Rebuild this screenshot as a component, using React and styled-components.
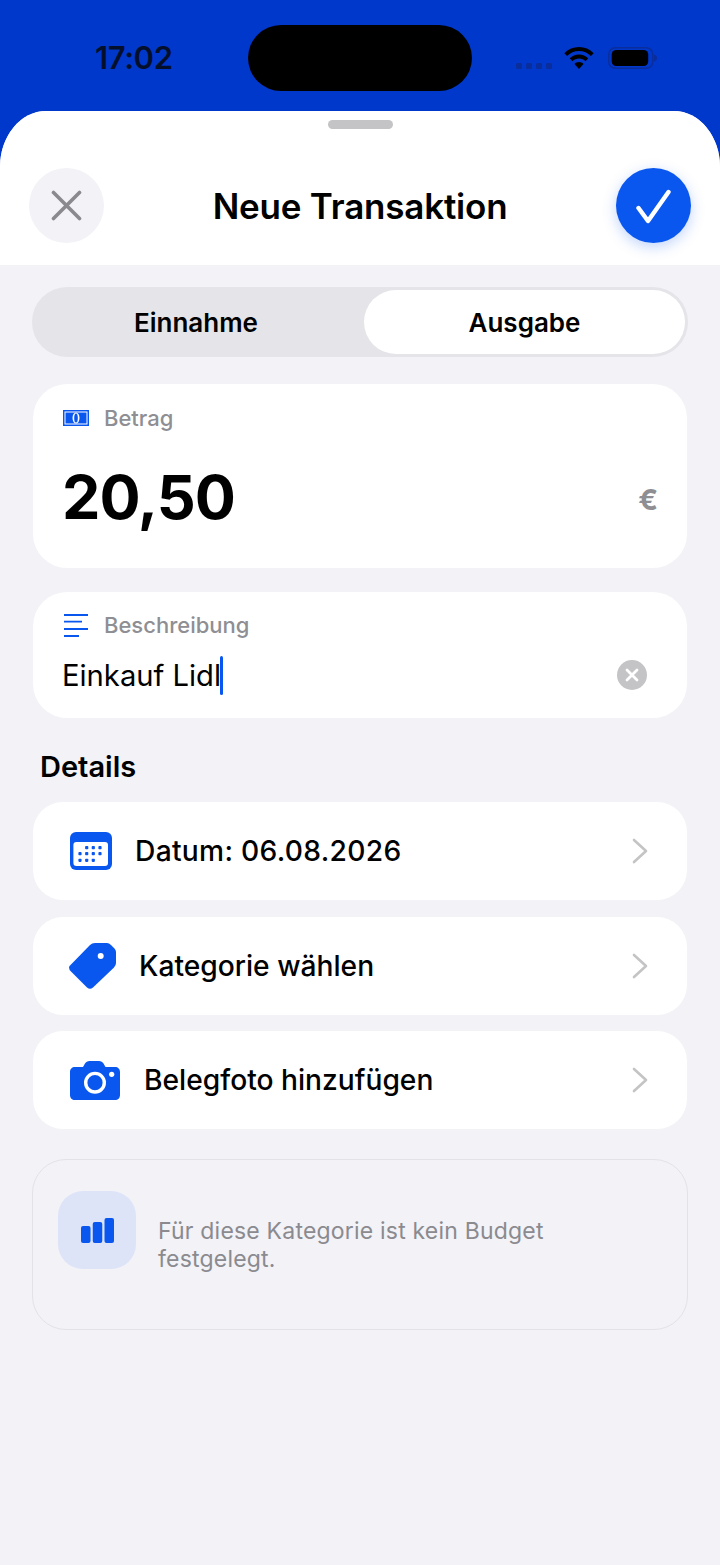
import styled, { createGlobalStyle } from "styled-components";

const BLUE = "#0a57f0";

const GlobalStyle = createGlobalStyle`
  html, body {
    margin: 0;
    padding: 0;
    background: #f2f2f7;
  }
  * {
    box-sizing: border-box;
  }
  body {
    font-family: Inter, "Liberation Sans", sans-serif;
    -webkit-font-smoothing: antialiased;
  }
`;

const Page = styled.div`
  width: 720px;
  height: 1565px;
  overflow: hidden;
  background: #0038cc;
`;

const StatusBar = styled.div`
  height: 111px;
  padding-top: 25px;
  display: grid;
  grid-template-columns: 248px 224px 248px;
  align-items: start;
`;

const Time = styled.div`
  font-size: 31px;
  line-height: 66px;
  font-weight: 600;
  color: #040f2c;
  padding-left: 95px;
  letter-spacing: -0.4px;
`;

const Island = styled.div`
  height: 66px;
  border-radius: 33px;
  background: #000;
`;

const StatusIcons = styled.div`
  display: flex;
  align-items: flex-start;
  padding: 22px 0 0 44px;
  svg {
    flex: none;
  }
`;

const Dots = styled.div`
  display: flex;
  gap: 4px;
  margin: 16px 12px 0 0;
  span {
    width: 6px;
    height: 6px;
    border-radius: 1.5px;
    background: #0a2d9c;
  }
`;

const BatteryWrap = styled.div`
  margin-left: 14px;
  line-height: 0;
`;

const Sheet = styled.div`
  height: 1454px;
  background: #f2f2f7;
  border-radius: 46px 46px 0 0 / 56px 56px 0 0;
  overflow: hidden;
`;

const SheetTop = styled.div`
  background: #fff;
  height: 154px;
  padding-top: 9px;
`;

const Grabber = styled.div`
  width: 65px;
  height: 9px;
  margin: 0 auto;
  border-radius: 5px;
  background: #c4c4c6;
`;

const Header = styled.div`
  margin-top: 39px;
  padding: 0 29px;
  display: flex;
  align-items: center;
  justify-content: space-between;
`;

const Title = styled.h1`
  margin: 0;
  font-size: 35px;
  font-weight: 600;
  color: #000;
  letter-spacing: -0.2px;
`;

const RoundButton = styled.div`
  width: 75px;
  height: 75px;
  border-radius: 50%;
  display: flex;
  align-items: center;
  justify-content: center;
  background: ${(p) => (p.$primary ? BLUE : "#f2f2f7")};
  box-shadow: ${(p) => (p.$primary ? "0 4px 14px rgba(10, 87, 240, 0.25)" : "none")};
`;

const Content = styled.div`
  padding: 22px 33px 0;
  display: flex;
  flex-direction: column;
`;

const Segmented = styled.div`
  height: 70px;
  margin: 0 -1px 27px;
  padding: 3px;
  border-radius: 35px;
  background: #e4e4e9;
  display: grid;
  grid-template-columns: 322px 1fr;
  column-gap: 7px;
`;

const Segment = styled.div`
  display: flex;
  align-items: center;
  justify-content: center;
  border-radius: 32px;
  font-size: 26px;
  font-weight: 600;
  color: #000;
  background: ${(p) => (p.$active ? "#fff" : "transparent")};
`;

const Card = styled.div`
  background: #fff;
  border-radius: 34px;
  height: ${(p) => p.$height}px;
  padding: ${(p) => p.$pad};
  margin-bottom: 24px;
`;

const FieldLabel = styled.div`
  display: flex;
  align-items: center;
  gap: 15px;
  height: 26px;
  padding-left: 1px;
  font-size: 22px;
  font-weight: 500;
  color: #8e8e93;
`;

const AmountRow = styled.div`
  display: flex;
  align-items: center;
  justify-content: space-between;
  margin-top: 28px;
`;

const Amount = styled.div`
  font-size: 61px;
  line-height: 76px;
  font-weight: 700;
  color: #000;
  letter-spacing: -1px;
`;

const Currency = styled.div`
  font-size: 29px;
  font-weight: 700;
  color: #8e8e93;
  margin-top: 5px;
`;

const InputRow = styled.div`
  display: flex;
  align-items: center;
  justify-content: space-between;
  margin-top: 16px;
  height: 42px;
  padding-right: 11px;
`;

const InputText = styled.div`
  display: flex;
  align-items: center;
  font-size: 29.2px;
  font-weight: 400;
  color: #000;
`;

const Caret = styled.span`
  display: block;
  width: 3.5px;
  height: 39px;
  margin-left: -1.5px;
  border-radius: 2px;
  background: ${BLUE};
`;

const ClearButton = styled.div`
  width: 30px;
  height: 30px;
  border-radius: 50%;
  background: #c4c4c6;
  display: flex;
  align-items: center;
  justify-content: center;
`;

const SectionTitle = styled.h2`
  margin: 8px 0 18px 7px;
  font-size: 29px;
  line-height: 34px;
  font-weight: 600;
  color: #000;
`;

const Rows = styled.div`
  display: flex;
  flex-direction: column;
  gap: 16.5px;
`;

const Row = styled.div`
  height: 98px;
  flex: none;
  padding: 0 39px 0 ${(p) => p.$left}px;
  border-radius: 30px;
  background: #fff;
  display: flex;
  align-items: center;
  gap: ${(p) => p.$gap}px;
  svg {
    flex: none;
  }
`;

const RowLabel = styled.div`
  flex: 1;
  font-size: 28.2px;
  font-weight: 500;
  color: #000;
  letter-spacing: ${(p) => p.$spacing || 0}px;
`;

const InfoBox = styled.div`
  margin: 30px -1px 0;
  height: 171px;
  padding: 31px 25px 0;
  border: 1px solid #e2e2e7;
  border-radius: 34px;
  display: flex;
  gap: 22px;
`;

const InfoTile = styled.div`
  width: 78px;
  height: 78px;
  flex: none;
  border-radius: 25px;
  background: #dde4f8;
  display: flex;
  align-items: center;
  justify-content: center;
`;

const InfoText = styled.div`
  padding-top: 26px;
  font-size: 23px;
  line-height: 28px;
  color: #8a8a8f;
  letter-spacing: 0.2px;
`;

const Chevron = () => (
  <svg width="16" height="26" viewBox="0 0 16 26" fill="none">
    <path d="M2 2l12 11L2 24" stroke="#c4c4c6" strokeWidth="2.6" strokeLinecap="round" strokeLinejoin="round" />
  </svg>
);

const CALENDAR_DOTS = [
  [16.7, 15.7], [23.3, 15.7], [30, 15.7],
  [10, 21.7], [16.7, 21.7], [23.3, 21.7], [30, 21.7],
  [10, 28.3], [16.7, 28.3], [23.3, 28.3],
];

const CalendarIcon = () => (
  <svg width="42" height="38" viewBox="0 0 42 38">
    <rect width="42" height="38" rx="6" fill={BLUE} />
    <rect x="3.4" y="10" width="34.6" height="24" rx="3" fill="#fff" />
    {CALENDAR_DOTS.map(([x, y]) => (
      <rect key={`${x}-${y}`} x={x - 1.6} y={y - 1.6} width="3.2" height="3.2" rx="0.8" fill={BLUE} />
    ))}
  </svg>
);

const TagIcon = () => (
  <svg width="48" height="48" viewBox="0 0 48 48">
    <path
      d="M21 3Q23 1 26 1H38Q40 1 42 3L45.500 6.500Q47 8 47 10V21Q47 23.500 45 25.500L24 45.500Q21 48 18 45.500L2 29.500Q0 27.500 0 25.500Q0 24 2 22.500Z"
      fill={BLUE}
    />
    <circle cx="31.700" cy="14" r="3" fill="#fff" />
  </svg>
);

const CameraIcon = () => (
  <svg width="50" height="39" viewBox="0 0 50 39">
    <path
      d="M5 6h8l2-3.500C16 1 17.500 0 19.500 0h9.500c2 0 3.500 1 4.500 2.500L35.500 6H45c3 0 5 2 5 5v23c0 3-2 5-5 5H5c-3 0-5-2-5-5V11c0-3 2-5 5-5z"
      fill={BLUE}
    />
    <circle cx="25" cy="21.700" r="9.300" fill="none" stroke="#fff" strokeWidth="3.400" />
    <circle cx="41.700" cy="13.300" r="2.600" fill="#fff" />
  </svg>
);

const App = () => (
  <>
    <GlobalStyle />
    <Page>
      <StatusBar>
        <Time>17:02</Time>
        <Island />
        <StatusIcons>
          <Dots>
            <span />
            <span />
            <span />
            <span />
          </Dots>
          <svg width="30" height="22" viewBox="0 0 30 22">
            <path d="M15 0c5.600 0 10.800 2.200 14.700 6.200l-2.800 2.900C23.800 5.900 19.600 4 15 4S6.200 5.900 3.100 9.100L.3 6.200C4.200 2.200 9.400 0 15 0z" />
            <path d="M15 7.500c3.600 0 6.800 1.400 9.300 3.800l-2.800 2.900C19.800 12.500 17.500 11.500 15 11.500s-4.800 1-6.500 2.700l-2.800-2.900C8.200 8.900 11.400 7.500 15 7.500z" />
            <path d="M15 15c1.800 0 3.400.7 4.500 1.900L15 22l-4.500-5.100c1.100-1.200 2.700-1.900 4.500-1.900z" />
          </svg>
          <BatteryWrap>
            <svg width="50" height="22" viewBox="0 0 50 22">
              <rect x="0.750" y="0.750" width="44" height="20.500" rx="6.500" fill="none" stroke="#0a2d9c" strokeWidth="1.500" />
              <rect x="3.700" y="3" width="36.500" height="16" rx="4.500" fill="#000" />
              <path d="M46 7.500c1.800.5 3 1.800 3 3.500s-1.200 3-3 3.500z" fill="#0a2d9c" />
            </svg>
          </BatteryWrap>
        </StatusIcons>
      </StatusBar>

      <Sheet>
        <SheetTop>
          <Grabber />
          <Header>
            <RoundButton>
              <svg width="32" height="32" viewBox="0 0 32 32" fill="none">
                <path d="M2.500 2.500l26 26M28.500 2.500l-26 26" stroke="#8a8a8e" strokeWidth="3.600" strokeLinecap="round" />
              </svg>
            </RoundButton>
            <Title>Neue Transaktion</Title>
            <RoundButton $primary>
              <svg width="36" height="36" viewBox="0 0 36 36" fill="none">
                <path d="M2.500 20L12 33L32.500 4" stroke="#fff" strokeWidth="4.400" strokeLinecap="round" strokeLinejoin="round" />
              </svg>
            </RoundButton>
          </Header>
        </SheetTop>

        <Content>
          <Segmented>
            <Segment>Einnahme</Segment>
            <Segment $active>Ausgabe</Segment>
          </Segmented>

          <Card $height={184} $pad="21px 29px 0">
            <FieldLabel>
              <svg width="26" height="16" viewBox="0 0 26 16">
                <rect width="26" height="16" fill={BLUE} />
                <rect x="2" y="2" width="22" height="12" fill="none" stroke="#fff" strokeWidth="1" />
                <ellipse cx="13" cy="8" rx="3.500" ry="5.500" fill="#fff" />
                <ellipse cx="13" cy="8" rx="1.800" ry="4.500" fill={BLUE} />
              </svg>
              Betrag
            </FieldLabel>
            <AmountRow>
              <Amount>20,50</Amount>
              <Currency>€</Currency>
            </AmountRow>
          </Card>

          <Card $height={126} $pad="20px 29px 0">
            <FieldLabel>
              <svg width="26" height="23" viewBox="0 0 26 23" fill="none">
                <path d="M1 1h24M1 7.700h18M1 15h24M1 22h15" stroke={BLUE} strokeWidth="1.800" />
              </svg>
              Beschreibung
            </FieldLabel>
            <InputRow>
              <InputText>
                Einkauf Lidl
                <Caret />
              </InputText>
              <ClearButton>
                <svg width="14" height="14" viewBox="0 0 14 14" fill="none">
                  <path d="M2 2l10 10M12 2L2 12" stroke="#fff" strokeWidth="2.800" strokeLinecap="round" />
                </svg>
              </ClearButton>
            </InputRow>
          </Card>

          <SectionTitle>Details</SectionTitle>

          <Rows>
            <Row $left={37} $gap={23}>
              <CalendarIcon />
              <RowLabel $spacing={0.3}>Datum: 06.08.2026</RowLabel>
              <Chevron />
            </Row>
            <Row $left={36} $gap={22}>
              <TagIcon />
              <RowLabel>Kategorie wählen</RowLabel>
              <Chevron />
            </Row>
            <Row $left={37} $gap={24}>
              <CameraIcon />
              <RowLabel>Belegfoto hinzufügen</RowLabel>
              <Chevron />
            </Row>
          </Rows>

          <InfoBox>
            <InfoTile>
              <svg width="33" height="25" viewBox="0 0 33 25" fill={BLUE}>
                <rect x="0" y="8" width="9.500" height="17" rx="2" />
                <rect x="11.750" y="4" width="9.500" height="21" rx="2" />
                <rect x="23.500" y="0" width="9.500" height="25" rx="2" />
              </svg>
            </InfoTile>
            <InfoText>Für diese Kategorie ist kein Budget festgelegt.</InfoText>
          </InfoBox>
        </Content>
      </Sheet>
    </Page>
  </>
);

export default App;
